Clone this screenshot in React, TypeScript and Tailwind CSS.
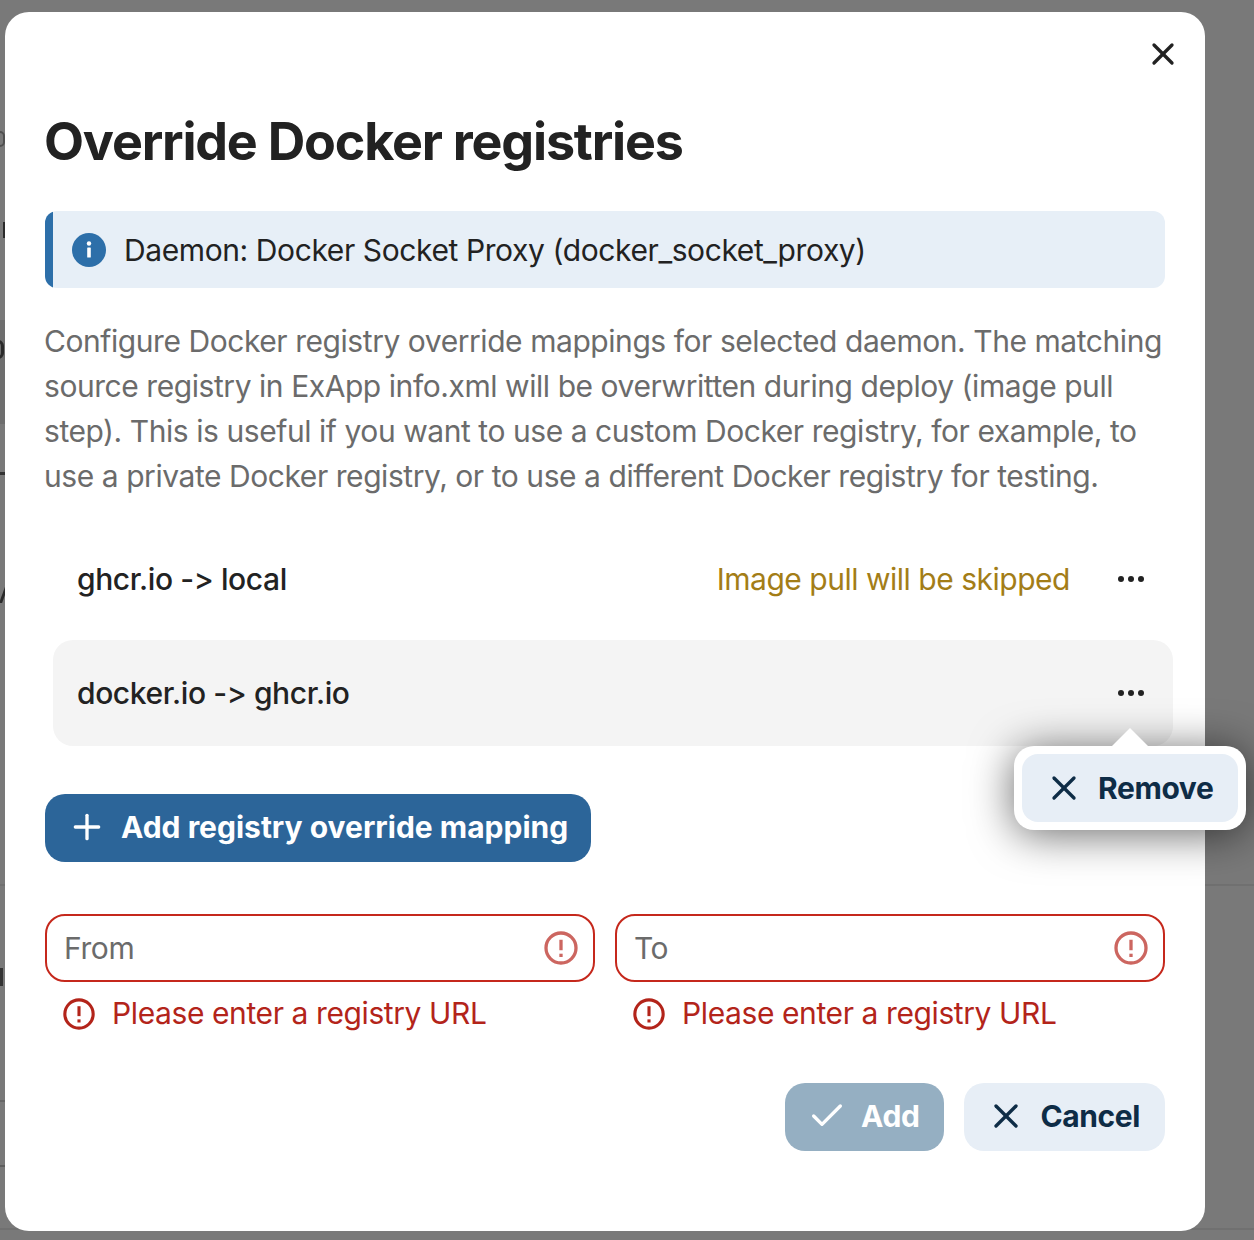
import { Check, Plus, X } from "lucide-react";

function AlertIcon({ className }: { className: string }) {
  return (
    <svg viewBox="0 0 24 24" className={className} fill="none" stroke="currentColor" strokeWidth="2.2">
      <circle cx="12" cy="12" r="10" />
      <path d="M12 6.5v7" />
      <path d="M12 15.8v2.2" />
    </svg>
  );
}

function DotsIcon() {
  return (
    <svg viewBox="0 0 28 8" className="h-2 w-7 fill-[#222222]">
      <circle cx="4" cy="4" r="3" />
      <circle cx="14" cy="4" r="3" />
      <circle cx="24" cy="4" r="3" />
    </svg>
  );
}

function ErrorField({ label }: { label: string }) {
  return (
    <div className="flex w-[550px] flex-col">
      <div className="flex h-[68px] items-center justify-between rounded-[20px] border-2 border-[#c5281c] bg-white pl-[17px] pr-[14px] text-[#6b6b6b]">
        <span>{label}</span>
        <AlertIcon className="h-9 w-9 text-[#cc6660]" />
      </div>
      <div className="mt-[9px] flex h-[45px] items-center pl-[17px] text-[#b3241a]">
        <AlertIcon className="h-[34px] w-[34px] shrink-0" />
        <span className="ml-[16px]">Please enter a registry URL</span>
      </div>
    </div>
  );
}

export default function App() {
  return (
    <div className="relative h-[1240px] w-[1254px] overflow-hidden bg-[#797979] pl-[5px] pt-3 font-['Inter',sans-serif] text-[30px] leading-[45px] tracking-[-0.4px] text-[#222222] [font-variant-ligatures:none] [font-feature-settings:'calt'_0]">
      {/* page behind the backdrop, only its edges show */}
      <div className="absolute left-0 top-[320px] h-[104px] w-[5px] bg-[#6e6e6e]" />
      <div className="absolute -left-[5px] top-[131px] h-4 w-2.5 rounded-md border-2 border-[#505050]" />
      <div className="absolute left-[3px] top-[222px] h-4 w-0.5 bg-[#2a2a2a]" />
      <div className="absolute -left-[8px] top-[340px] h-[19px] w-3 rounded-full border-[3px] border-[#2a2a2a]" />
      <div className="absolute left-0 top-[472px] h-[3px] w-[5px] bg-[#333333]" />
      <div className="absolute left-0 top-[587px] h-4 w-[3px] translate-x-0.5 skew-x-[-20deg] bg-[#2a2a2a]" />
      <div className="absolute inset-x-0 top-[884px] h-0.5 bg-[#707070]" />
      <div className="absolute left-0 top-[968px] h-[18px] w-[3px] bg-[#333333]" />
      <div className="absolute left-0 top-[1100px] h-0.5 w-[5px] bg-[#666666]" />
      <div className="absolute left-0 top-[1165px] h-0.5 w-[5px] bg-[#5e5e5e]" />
      <div className="absolute inset-x-0 top-[1228px] h-0.5 bg-[#707070]" />

      <div className="relative h-[1219px] w-[1200px] rounded-[24px] bg-white px-10">
        <button className="absolute right-[22px] top-[22px] flex h-10 w-10 items-center justify-center text-[#222222]">
          <X className="h-9 w-9" strokeWidth={2.2} />
        </button>

        <h2 className="-ml-px pt-[98px] text-[52px] font-bold leading-[64px] tracking-[-1.2px]">Override Docker registries</h2>

        <div className="mt-[37px] flex h-[77px] items-center overflow-hidden rounded-xl bg-[#e7eff7]">
          <div className="h-full w-2 bg-[#2d6fa9]" />
          <svg viewBox="0 0 34 34" className="ml-[19px] h-[34px] w-[34px]">
            <circle cx="17" cy="17" r="17" fill="#2d6fa9" />
            <circle cx="17" cy="10.5" r="2.2" fill="white" />
            <rect x="15.2" y="14.5" width="3.6" height="10" rx="0.6" fill="white" />
          </svg>
          <span className="ml-[18px] pt-0.5">Daemon: Docker Socket Proxy (docker_socket_proxy)</span>
        </div>

        <p className="-ml-px mt-[31px] tracking-[-0.44px] text-[#6b6b6b]">
          Configure Docker registry override mappings for selected daemon. The matching source registry in ExApp info.xml will be overwritten during deploy (image pull step). This is useful if you want to use a custom Docker registry, for example, to use a private Docker registry, or to use a different Docker registry for testing.
        </p>

        <div className="ml-2 -mr-2 mt-[27px] flex h-[106px] items-center justify-between pl-6 pr-[28px]">
          <span className="font-medium">ghcr.io -&gt; local</span>
          <div className="flex items-center">
            <span className="tracking-[-0.48px] text-[#a37d17]">Image pull will be skipped</span>
            <span className="ml-[47px]"><DotsIcon /></span>
          </div>
        </div>

        <div className="ml-2 -mr-2 mt-[8px] flex h-[106px] items-center justify-between rounded-[20px] bg-[#f4f4f4] pl-6 pr-[28px]">
          <span className="font-medium">docker.io -&gt; ghcr.io</span>
          <DotsIcon />
        </div>

        <button className="mt-[48px] flex h-[68px] items-center rounded-[20px] bg-[#2c6599] pb-0.5 pl-[22px] pr-[23px] font-bold tracking-normal text-white">
          <Plus className="h-10 w-10" strokeWidth={2} />
          <span className="ml-[14px]">Add registry override mapping</span>
        </button>

        <div className="mt-[52px] flex justify-between">
          <ErrorField label="From" />
          <ErrorField label="To" />
        </div>

        <div className="mt-[47px] flex justify-end gap-5 font-bold">
          <button className="flex h-[68px] items-center rounded-[20px] bg-[#95afc2] pb-0.5 pl-[22px] pr-[25px] text-white">
            <Check className="h-10 w-10" strokeWidth={2} />
            <span className="ml-[14px]">Add</span>
          </button>
          <button className="flex h-[68px] items-center rounded-[20px] bg-[#e7eef6] pb-0.5 pl-[22px] pr-[25px] text-[#0e2c46]">
            <X className="h-10 w-10" strokeWidth={2} />
            <span className="ml-[14px]">Cancel</span>
          </button>
        </div>

        {/* actions popover for the second row */}
        <div className="absolute left-[1009px] top-[734px] rounded-[20px] bg-white p-2 shadow-[0_4px_44px_rgba(0,0,0,0.6)]">
          <div className="absolute -top-[18px] left-[98px] h-0 w-0 border-x-[18px] border-b-[18px] border-x-transparent border-b-white" />
          <div className="flex h-[68px] w-[216px] items-center rounded-[16px] bg-[#e7eef6] pl-[22px] font-bold text-[#0e2c46]">
            <X className="h-10 w-10" strokeWidth={2} />
            <span className="ml-[14px]">Remove</span>
          </div>
        </div>
      </div>
    </div>
  );
}
